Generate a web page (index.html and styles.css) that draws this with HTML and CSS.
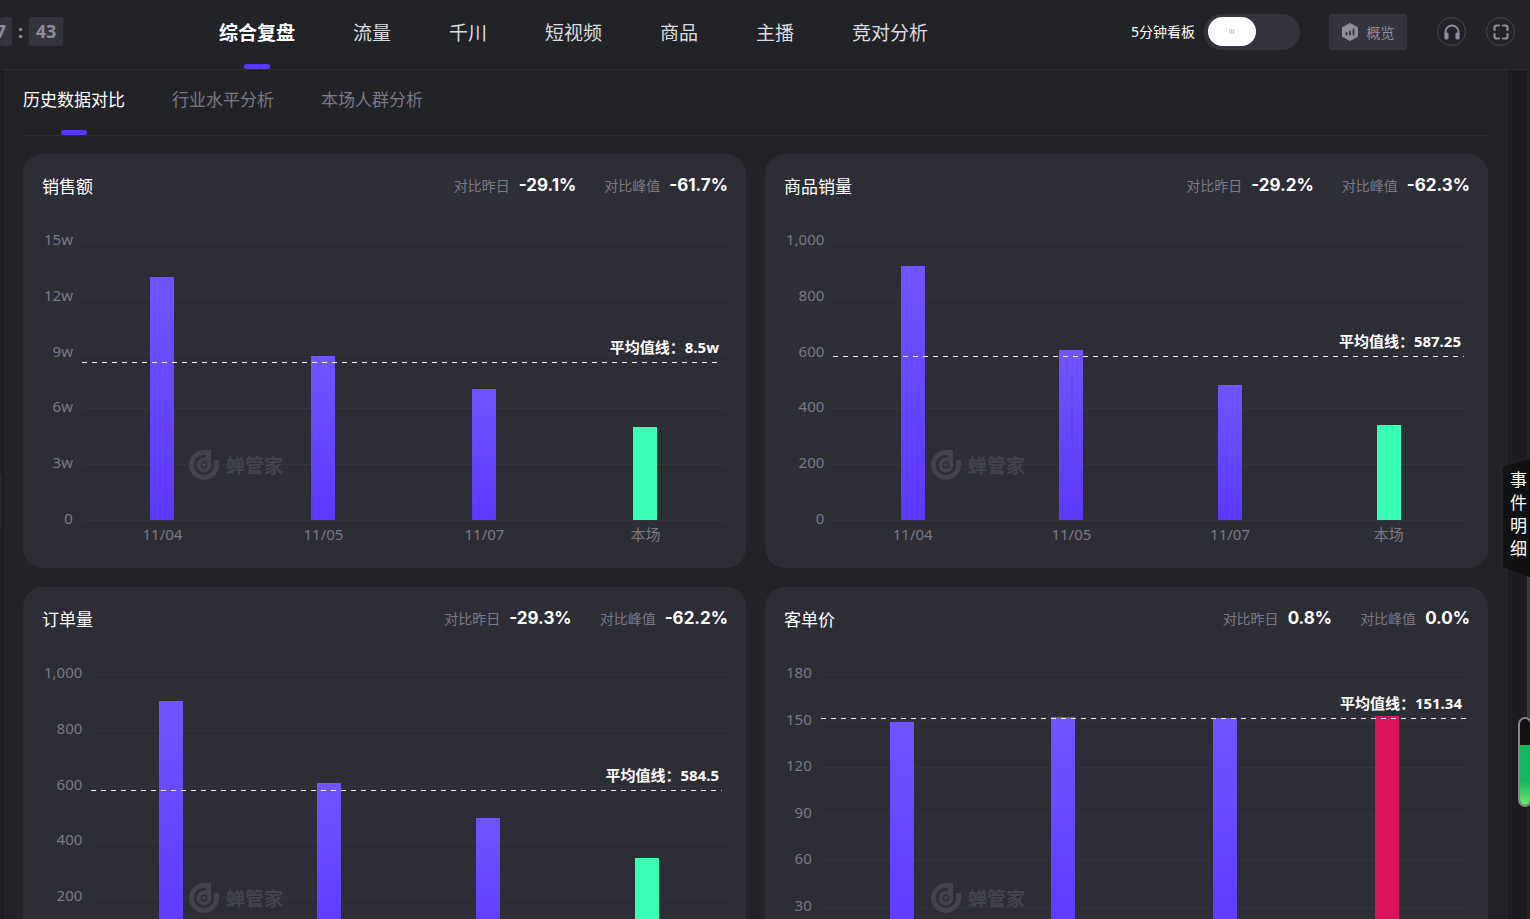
FILE: index.html
```html
<!DOCTYPE html>
<html lang="zh-CN">
<head>
<meta charset="utf-8">
<title>综合复盘</title>
<link rel="stylesheet" href="styles.css">
</head>
<body>
<svg class="defs" aria-hidden="true">
  <symbol id="logo" viewBox="0 0 32 32">
    <path d="M23 1H16A15 15 0 1 0 31 16V11H26V16A10 10 0 1 1 18 6.200V11H23Z"/>
    <circle cx="16" cy="16" r="5.500" fill="none" stroke="currentColor" stroke-width="4"/>
    <path d="M18 4h5v9h-5z"/>
    <circle cx="16" cy="16" r="2"/>
  </symbol>
</svg>
<div class="app">
  <header class="topbar">
    <div class="timer"><span class="digits cut">7</span><span class="colon">:</span><span class="digits">43</span></div>
    <nav class="nav">
      <a href="#" class="active">综合复盘</a>
      <a href="#">流量</a>
      <a href="#">千川</a>
      <a href="#">短视频</a>
      <a href="#">商品</a>
      <a href="#">主播</a>
      <a href="#">竞对分析</a>
    </nav>
    <div class="tools">
      <label class="board" for="board">5分钟看板</label>
      <input class="switch" type="checkbox" role="switch" id="board">
      <button class="overview" type="button">
        <svg width="16" height="18" viewBox="0 0 16 18"><path d="M8 0.500L15.500 4.500V13.500L8 17.500L0.500 13.500V4.500Z" fill="#8f8d9d" stroke="#8f8d9d" stroke-linejoin="round"/><path d="M4.500 11.500V10M8 11.500V8.500M11.500 11.500V6.500" stroke="#34343e" stroke-width="1.800" stroke-linecap="round"/></svg>
        <span>概览</span>
      </button>
      <button class="round" type="button" aria-label="客服">
        <svg width="18" height="18" viewBox="0 0 18 18"><path d="M2.500 12V9a6.500 6.500 0 0 1 13 0v3" fill="none" stroke="#8f8d9d" stroke-width="2"/><rect x="1.500" y="9.500" width="4" height="7" rx="1.500" fill="#8f8d9d"/><rect x="12.500" y="9.500" width="4" height="7" rx="1.500" fill="#8f8d9d"/></svg>
      </button>
      <button class="round" type="button" aria-label="全屏">
        <svg width="18" height="18" viewBox="0 0 18 18" fill="none" stroke="#8f8d9d" stroke-width="2.200" stroke-linecap="round"><path d="M2.500 7V4.500a2 2 0 0 1 2-2H7M11 2.500h2.500a2 2 0 0 1 2 2V7M15.500 11v2.500a2 2 0 0 1-2 2H11M7 15.500H4.500a2 2 0 0 1-2-2V11"/></svg>
      </button>
    </div>
  </header>

  <main class="content">
    <nav class="tabs">
      <a href="#" class="active">历史数据对比</a>
      <a href="#">行业水平分析</a>
      <a href="#">本场人群分析</a>
    </nav>

    <div class="cards">
      <section class="card">
        <header class="card-head">
          <h2>销售额</h2>
          <dl><div><dt>对比昨日</dt><dd>-29.1%</dd></div><div><dt>对比峰值</dt><dd>-61.7%</dd></div></dl>
        </header>
        <div class="chart">
          <div class="y-axis"><span>15w</span><span>12w</span><span>9w</span><span>6w</span><span>3w</span><span>0</span></div>
          <div class="plot">
            <div class="lines"><i></i><i></i><i></i><i></i><i></i><i></i></div>
            <div class="bars"><b style="height:87.1%"></b><b style="height:58.8%"></b><b style="height:47.1%"></b><b class="now" style="height:33.3%"></b></div>
            <div class="average short" style="bottom:56.5%">平均值线：8.5w</div>
          </div>
          <div class="x-axis"><span>11/04</span><span>11/05</span><span>11/07</span><span>本场</span></div>
        </div>
        <div class="watermark"><svg width="32" height="32"><use href="#logo"/></svg><span>蝉管家</span></div>
      </section>

      <section class="card">
        <header class="card-head">
          <h2>商品销量</h2>
          <dl><div><dt>对比昨日</dt><dd>-29.2%</dd></div><div><dt>对比峰值</dt><dd>-62.3%</dd></div></dl>
        </header>
        <div class="chart">
          <div class="y-axis"><span>1,000</span><span>800</span><span>600</span><span>400</span><span>200</span><span>0</span></div>
          <div class="plot">
            <div class="lines"><i></i><i></i><i></i><i></i><i></i><i></i></div>
            <div class="bars"><b style="height:91%"></b><b style="height:60.9%"></b><b style="height:48.4%"></b><b class="now" style="height:34.2%"></b></div>
            <div class="average short" style="bottom:58.6%">平均值线：587.25</div>
          </div>
          <div class="x-axis"><span>11/04</span><span>11/05</span><span>11/07</span><span>本场</span></div>
        </div>
        <div class="watermark"><svg width="32" height="32"><use href="#logo"/></svg><span>蝉管家</span></div>
      </section>

      <section class="card">
        <header class="card-head">
          <h2>订单量</h2>
          <dl><div><dt>对比昨日</dt><dd>-29.3%</dd></div><div><dt>对比峰值</dt><dd>-62.2%</dd></div></dl>
        </header>
        <div class="chart">
          <div class="y-axis"><span>1,000</span><span>800</span><span>600</span><span>400</span><span>200</span><span>0</span></div>
          <div class="plot">
            <div class="lines"><i></i><i></i><i></i><i></i><i></i><i></i></div>
            <div class="bars"><b style="height:90.5%"></b><b style="height:60.8%"></b><b style="height:48.4%"></b><b class="now" style="height:34.2%"></b></div>
            <div class="average short" style="bottom:58.2%">平均值线：584.5</div>
          </div>
          <div class="x-axis"><span>11/04</span><span>11/05</span><span>11/07</span><span>本场</span></div>
        </div>
        <div class="watermark"><svg width="32" height="32"><use href="#logo"/></svg><span>蝉管家</span></div>
      </section>

      <section class="card">
        <header class="card-head">
          <h2>客单价</h2>
          <dl><div><dt>对比昨日</dt><dd>0.8%</dd></div><div><dt>对比峰值</dt><dd>0.0%</dd></div></dl>
        </header>
        <div class="chart">
          <div class="y-axis"><span>180</span><span>150</span><span>120</span><span>90</span><span>60</span><span>30</span><span>0</span></div>
          <div class="plot">
            <div class="lines"><i></i><i></i><i></i><i></i><i></i><i></i><i></i></div>
            <div class="bars"><b style="height:82.8%"></b><b style="height:84.6%"></b><b style="height:84.2%"></b><b class="peak" style="height:85.1%"></b></div>
            <div class="average" style="bottom:84%">平均值线：151.34</div>
          </div>
          <div class="x-axis"><span>11/04</span><span>11/05</span><span>11/07</span><span>本场</span></div>
        </div>
        <div class="watermark"><svg width="32" height="32"><use href="#logo"/></svg><span>蝉管家</span></div>
      </section>
    </div>
  </main>

  <div class="left-handle"></div>
  <div class="side-rail"></div>
  <button class="events" type="button">事件明细</button>
  <div class="battery"><div class="charge"></div></div>
</div>
</body>
</html>
```
FILE: styles.css
```css
* { box-sizing: border-box; }

body {
  margin: 0;
  background: #1b1c1e;
  color: #fff;
  font-family: "Noto Sans", "Noto Sans CJK SC", sans-serif;
  font-size: 15px;
}

a { color: inherit; text-decoration: none; }
button { border: 0; padding: 0; color: inherit; font: inherit; cursor: pointer; }
.defs { display: none; }

.app {
  position: relative;
  display: flex;
  flex-direction: column;
  height: 100vh;
  overflow: hidden;
}

/* Top bar */
.topbar {
  display: flex;
  flex: none;
  height: 70px;
  padding-right: 15px;
  background: #222327;
  border-bottom: 1px solid #2e2f33;
}

.timer {
  display: flex;
  width: 219px;
  padding-top: 17px;
  color: #8f8d9d;
  font-size: 18px;
  font-weight: 700;
  line-height: 28px;
}
.digits {
  width: 34px;
  height: 29px;
  border-radius: 3px;
  background: #34343e;
  text-align: center;
}
.digits.cut {
  display: flex;
  justify-content: flex-end;
  width: 12px;
  padding-right: 6px;
}
.colon { width: 17px; text-align: center; }

.nav { display: flex; gap: 58px; }
.nav a {
  position: relative;
  color: #dcdce2;
  font-size: 19px;
  line-height: 66px;
  white-space: nowrap;
}
.nav a.active { color: #fff; font-weight: 700; }
.active::after {
  content: "";
  position: absolute;
  bottom: 0;
  left: 50%;
  width: 26px;
  height: 5px;
  margin-left: -13px;
  border-radius: 3px;
  background: #5c38ff;
}

.tools {
  display: flex;
  align-items: flex-start;
  margin-left: auto;
  padding-top: 14px;
}
.board { margin-right: 9px; font-size: 14px; line-height: 36px; }
.switch {
  appearance: none;
  width: 96px;
  height: 36px;
  margin: 0 29px 0 0;
  padding: 3px 4px;
  border-radius: 18px;
  background: #34343e;
}
.switch::before {
  content: "";
  display: block;
  width: 48px;
  height: 29px;
  border-radius: 15px;
  background: repeating-linear-gradient(90deg, #ccc 0 1px, #eee 1px 2px) center / 6px 5px no-repeat #fff;
}
.overview {
  display: flex;
  align-items: center;
  justify-content: center;
  gap: 9px;
  width: 78px;
  height: 36px;
  margin-right: 30px;
  border-radius: 4px;
  background: #34343e;
  color: #8f8d9d;
  font-size: 14px;
}
.round {
  display: flex;
  align-items: center;
  justify-content: center;
  width: 29px;
  height: 29px;
  margin: 3px 0 0;
  border: 1px solid #45454e;
  border-radius: 50%;
  background: none;
}
.round + .round { margin-left: 20px; }

/* Content */
.content {
  flex: 1;
  min-height: 0;
  margin: 0 22px 0 4px;
  padding: 0 20px 20px 19px;
  background: #222327;
  overflow-y: auto;
  scrollbar-width: none;
}
.tabs {
  display: flex;
  gap: 47px;
  border-bottom: 1px solid #2e2f33;
  color: #7b7985;
  font-size: 17px;
  line-height: 60px;
}
.tabs a { position: relative; padding-bottom: 5px; }
.tabs a.active { color: #fff; }

.cards {
  display: grid;
  grid-template-columns: 1fr 1fr;
  gap: 19px;
  margin-top: 18px;
}
.card {
  position: relative;
  padding: 0 20px 19px 21px;
  border-radius: 20px;
  background: #2d2d35;
}
.card-head {
  display: flex;
  align-items: center;
  justify-content: space-between;
  height: 62px;
  margin: 0 -2px;
}
.card-head h2 { margin: 0; font-size: 17px; font-weight: 400; }
.card-head dl { display: flex; gap: 28px; margin: 0; }
.card-head dl div { display: flex; align-items: center; gap: 9px; }
.card-head dt { color: #7b7985; font-size: 14px; }
.card-head dd {
  margin: 0;
  font-family: Inter, sans-serif;
  font-size: 17px;
  font-weight: 700;
}

/* Bar chart */
.chart {
  display: grid;
  grid-template-columns: auto 1fr;
  column-gap: 9px;
  margin-top: 25px;
  color: #7b7985;
}
.y-axis {
  display: flex;
  flex-direction: column;
  justify-content: space-between;
  margin: -12px 0 -7px;
  line-height: 20px;
  text-align: right;
}
.plot { position: relative; height: 280px; }
.lines {
  display: flex;
  flex-direction: column;
  justify-content: space-between;
  height: 100%;
}
.lines i { height: 1px; background: #34343c; }
.bars {
  position: absolute;
  inset: 0 0 1px;
  display: flex;
  align-items: flex-end;
  justify-content: space-around;
}
.bars b { width: 24px; background: linear-gradient(#7154ff, #5c38ff); }
.bars .now { background: #38ffb5; }
.bars .peak { background: #da155c; }
.average {
  position: absolute;
  left: 0;
  right: 0;
  padding: 0 6px 5px 0;
  background: repeating-linear-gradient(90deg, #f0f0f2 0 5px, transparent 5px 10px) bottom / 100% 1px no-repeat;
  color: #fff;
  font-weight: 700;
  line-height: 22px;
  text-align: right;
}
.average.short { right: 4px; padding-right: 3px; }
.x-axis {
  grid-column: 2;
  display: flex;
  height: 28px;
  line-height: 26px;
}
.x-axis span { flex: 1; text-align: center; }

.watermark {
  position: absolute;
  bottom: 87px;
  left: 165px;
  display: flex;
  align-items: center;
  gap: 6px;
  height: 32px;
  color: #43434c;
  font-size: 19px;
  font-weight: 700;
}
.watermark svg { fill: currentColor; }

/* Floating side elements */
.left-handle {
  position: absolute;
  top: 473px;
  left: 0;
  width: 2px;
  height: 55px;
  border-radius: 0 2px 2px 0;
  background: #26272b;
}
.side-rail {
  position: absolute;
  top: 70px;
  right: 0;
  bottom: 0;
  width: 3px;
  background: linear-gradient(#222327 390px, #3a3a45 390px 670px, #222327 670px);
}
.events {
  position: absolute;
  top: 459px;
  right: 0;
  display: flex;
  align-items: flex-start;
  width: 27px;
  height: 118px;
  padding: 9px 3px 0 7px;
  background: #101113;
  clip-path: polygon(0 8px, 100% 0, 100% 100%, 0 108px);
  color: #fff;
  font-size: 17px;
  line-height: 23px;
}
.battery {
  position: absolute;
  top: 717px;
  right: -2px;
  display: flex;
  align-items: flex-end;
  width: 14px;
  height: 90px;
  border: 2px solid #85858a;
  border-radius: 7px;
  background: #111214;
  overflow: hidden;
}
.charge {
  width: 100%;
  height: 70%;
  background: linear-gradient(#12b85c 60%, #6ee86e);
}
```
